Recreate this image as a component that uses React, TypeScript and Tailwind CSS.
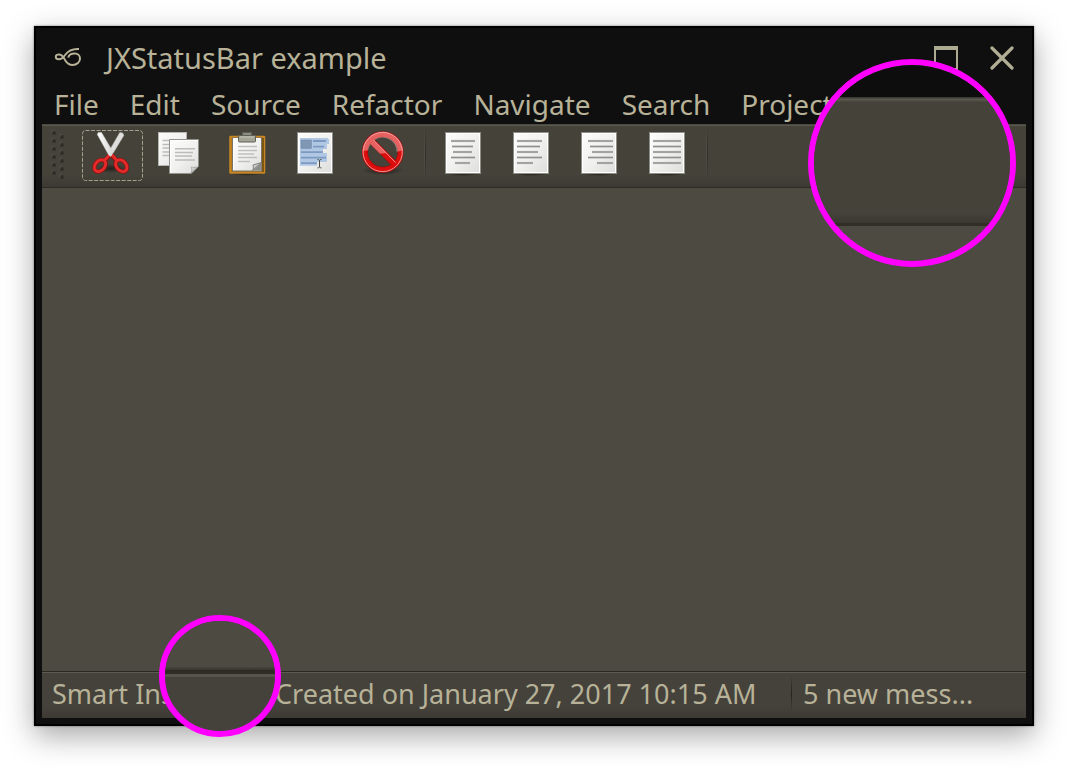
import type { ReactNode } from "react";

const MENUS = ["File", "Edit", "Source", "Refactor", "Navigate", "Search", "Project"];

function Defs() {
  return (
    <svg className="absolute size-0" aria-hidden="true">
      <defs>
        <linearGradient id="paper" x1="0" y1="0" x2="1" y2="1">
          <stop offset="0" stopColor="#fdfdfc" />
          <stop offset="0.5" stopColor="#f1f1f0" />
          <stop offset="1" stopColor="#dcdcda" />
        </linearGradient>
        <linearGradient id="blade" x1="0" y1="0" x2="1" y2="0">
          <stop offset="0" stopColor="#ffffff" />
          <stop offset="1" stopColor="#d6d6d4" />
        </linearGradient>
        <radialGradient id="shade">
          <stop offset="0" stopColor="#000" stopOpacity="0.5" />
          <stop offset="1" stopColor="#000" stopOpacity="0" />
        </radialGradient>
        <linearGradient id="fold" x1="0" y1="0" x2="1" y2="1">
          <stop offset="0" stopColor="#fafafa" />
          <stop offset="0.5" stopColor="#b9b9b7" />
          <stop offset="1" stopColor="#6f6f6c" />
        </linearGradient>
      </defs>
    </svg>
  );
}

function Icon({ children }: { children: ReactNode }) {
  return (
    <svg viewBox="0 0 48 48" className="size-12 shrink-0" aria-hidden="true">
      {children}
    </svg>
  );
}

function CutIcon() {
  return (
    <Icon>
      <ellipse cx="22" cy="38.500" rx="15" ry="4.500" fill="url(#shade)" />
      <g fill="none" stroke="#8e1010" strokeWidth="4.200">
        <ellipse cx="11" cy="35.700" rx="6.600" ry="4.800" transform="rotate(-48 11 35.700)" />
        <ellipse cx="32.300" cy="35.700" rx="6.600" ry="4.800" transform="rotate(48 32.300 35.700)" />
        <path d="M16.500 30l4.500-5M27 30l-4.500-5" />
      </g>
      <g fill="none" stroke="#e52a2a" strokeWidth="2.800">
        <ellipse cx="11" cy="35.700" rx="6.600" ry="4.800" transform="rotate(-48 11 35.700)" />
        <ellipse cx="32.300" cy="35.700" rx="6.600" ry="4.800" transform="rotate(48 32.300 35.700)" />
        <path d="M15.500 30.500l5-5.500M28 30.500l-5-5.500" />
      </g>
      <path d="M30.800 2.500l3 .6 1 2.400-10 16.500-3 4-2.500-3.500z" fill="#dededc" stroke="#c2c2c0" strokeWidth="0.500" />
      <path d="M8.300 4.500l.9-2 3.300-.1 11.400 19.400-2 4.700-2.200-1.500z" fill="url(#blade)" stroke="#cfcfcd" strokeWidth="0.500" />
    </Icon>
  );
}

function CopyIcon() {
  return (
    <Icon>
      <rect x="1.500" y="2.500" width="28" height="33" fill="url(#paper)" stroke="#b5b5b2" />
      <path d="M5.500 10.500h10M5.500 14.500h10M5.500 18h10M5.500 22h10M5.500 25.500h10" stroke="#bcbcba" strokeWidth="1.300" />
      <path d="M12.500 9.500h29v27l-7.500 7h-21.500z" fill="url(#paper)" stroke="#92928d" />
      <path d="M13.500 42.500v-32h27" fill="none" stroke="#fff" />
      <path d="M18 18.700h20M18 22.500h18M18 26h17M18 30h20" stroke="#bcbcba" strokeWidth="1.600" />
      <path d="M34 43.500c1-2 1-4 .3-6.500 2.500.8 5 .6 7.200-.5z" fill="url(#fold)" stroke="#8b8b87" strokeWidth="0.600" />
    </Icon>
  );
}

function PasteIcon() {
  return (
    <Icon>
      <ellipse cx="22" cy="43.500" rx="18" ry="2.500" fill="url(#shade)" />
      <rect x="5" y="6.500" width="34.500" height="36.500" rx="0.500" fill="#b87a18" stroke="#c98724" strokeWidth="1.500" />
      <path d="M38 8v34" stroke="#80550f" strokeWidth="2" />
      <rect x="7.500" y="8" width="29" height="33" fill="url(#paper)" stroke="#77736a" />
      <path d="M8.500 40v-31.500h27" fill="none" stroke="#fff" />
      <path d="M13 16.500h19M13 20.500h19M13 24h16M13 27.500h19M13 31.500h12" stroke="#bfbfbd" strokeWidth="1.500" />
      <path d="M27.500 40.500c1-1.500 1.200-3 .5-5.500l8.500-2.500z" fill="url(#fold)" stroke="#6b6b66" strokeWidth="0.800" />
      <path d="M28 40.500l8.500-8v8z" fill="#8d8d88" />
      <rect x="17.500" y="2.500" width="9" height="4" fill="#8b8c7e" stroke="#5f6055" />
      <rect x="13.500" y="5.500" width="17" height="6.500" rx="1" fill="#a3a394" stroke="#5f6055" />
      <path d="M15 7h14" stroke="#c4c4b8" />
    </Icon>
  );
}

function SelectAllIcon() {
  return (
    <Icon>
      <rect x="4.500" y="2.500" width="35" height="41" fill="url(#paper)" stroke="#8d8e89" />
      <rect x="5.500" y="3.500" width="33" height="39" fill="none" stroke="#fff" />
      <path d="M7 8h28v1h1v5h-2v5h-4v4h4v9h-10v3.700h-17z" fill="#b1c8e4" />
      <rect x="8" y="10" width="10.500" height="8.500" fill="#8097b3" stroke="#6e87a6" strokeWidth="0.500" />
      <path d="M20 11h13M20 16.700h11M8 22.200h22M8 27.700h25M8 33.200h16" stroke="#7d99bf" strokeWidth="1.800" />
      <path d="M24.500 29.500c1.200 0 2 .3 2 1.200v6c0 .8-.8 1.200-2 1.200M28.500 29.500c-1.200 0-2 .3-2 1.200v6c0 .8.800 1.200 2 1.200" fill="none" stroke="#4a4a48" />
    </Icon>
  );
}

function DeleteIcon() {
  return (
    <Icon>
      <ellipse cx="22" cy="40.500" rx="21" ry="5" fill="url(#shade)" />
      <circle cx="21.700" cy="22" r="17.800" fill="none" stroke="#b20a0a" strokeWidth="6" />
      <path d="M9.500 10l24.500 24.500" stroke="#b20a0a" strokeWidth="6.500" />
      <circle cx="21.700" cy="22" r="17.800" fill="none" stroke="#dc0d0d" strokeWidth="4.500" />
      <path d="M9.500 10l24.500 24.500" stroke="#dc0d0d" strokeWidth="5" />
      <path d="M1.500 21a20.300 20.300 0 0 1 40.500-.5c-3 .3-5 1-6.500 1.200A14 14 0 0 0 13 10.500l12.500 12.500-6.500.7-9.500-9.500a14 14 0 0 0-2.400 6z" fill="#fff" opacity="0.350" />
      <circle cx="21.700" cy="22" r="19.600" fill="none" stroke="#f6a4a4" strokeWidth="0.900" />
      <path d="M12.500 10l22 22.500" stroke="#f6a4a4" strokeWidth="0.900" />
    </Icon>
  );
}

function AlignIcon({ lines }: { lines: [number, number][] }) {
  return (
    <Icon>
      <ellipse cx="24" cy="44" rx="17" ry="2" fill="url(#shade)" />
      <rect x="6.500" y="2.500" width="35" height="41" fill="url(#paper)" stroke="#8d8e85" />
      <rect x="7.500" y="3.500" width="33" height="39" fill="none" stroke="#fff" />
      {lines.map(([a, b], i) => (
        <g key={i}>
          <path d={`M${a} ${11 + i * 5.5}H${b}`} stroke="#b7b7b5" strokeWidth="2.200" />
          <path d={`M${a} ${11 + i * 5.5}H${b}`} stroke="#8f8f8d" strokeWidth="1" />
        </g>
      ))}
    </Icon>
  );
}

function ToolButton({ label, focused, children }: { label: string; focused?: boolean; children: ReactNode }) {
  return (
    <button type="button" aria-label={label} className="relative flex h-[58px] w-[68px] shrink-0 justify-center pt-[5px]">
      {children}
      {focused && (
        <svg className="absolute left-[3px] top-[5px] h-[52px] w-[62px]" viewBox="0 0 62 52" aria-hidden="true">
          <rect x="0.500" y="0.500" width="60" height="50" rx="3" fill="none" stroke="#a5a18c" strokeDasharray="4 1.500" />
        </svg>
      )}
    </button>
  );
}

function Grip() {
  const rows = [0, 1, 2, 3, 4, 5];
  return (
    <svg viewBox="0 0 16 52" className="ml-2 mt-1 h-[52px] w-4 shrink-0" aria-hidden="true">
      {rows.map((i) => (
        <g key={i}>
          <circle cx="3" cy={3 + i * 8} r="2.200" fill="#4f4d45" />
          <circle cx="4" cy={4 + i * 8} r="2" fill="#302e29" />
          <circle cx="11" cy={7 + i * 8} r="2.200" fill="#4f4d45" />
          <circle cx="12" cy={8 + i * 8} r="2" fill="#302e29" />
        </g>
      ))}
    </svg>
  );
}

function ToolSeparator() {
  return (
    <div className="ml-[5px] mr-[3px] flex h-[56px] shrink-0">
      <div className="w-px bg-linear-to-b from-transparent via-[#514e46] to-transparent" />
      <div className="w-px bg-linear-to-b from-transparent via-[#2f2d27] to-transparent" />
    </div>
  );
}

function TitleBar() {
  return (
    <header className="flex h-[50px] items-center pb-[2px] pl-3 pr-2">
      <svg viewBox="0 0 28 20" className="h-5 w-7 shrink-0" aria-hidden="true">
        <path
          d="M25 1C18 0.800 14.500 2.500 11.500 6.500C9.500 9.300 8 11.300 5 11.300C2.600 11.300 1.800 9.900 1.800 8.800C1.800 7.400 3 6.400 5 6.400C9 6.400 9.500 9.500 11.500 12.700C13.500 15.900 15.800 17 18.500 17C23 17 26 14 26 10.500C26 7.500 23.800 5.500 20.800 5.500C17.500 5.500 14.800 7 14.300 9.600"
          fill="none"
          stroke="#b7b298"
          strokeWidth="2"
        />
      </svg>
      <h1 className="ml-6 flex-1 text-[29px] leading-9">JXStatusBar example</h1>
      <button type="button" aria-label="Maximize" className="flex size-8 items-center justify-center">
        <svg viewBox="0 0 24 24" className="size-6" aria-hidden="true">
          <path d="M0 0h24v24H0zM2 4v18h20V4z" fill="#aeaa92" fillRule="evenodd" />
        </svg>
      </button>
      <button type="button" aria-label="Close" className="ml-6 flex size-8 items-center justify-center">
        <svg viewBox="0 0 24 24" className="size-6" aria-hidden="true">
          <path d="M2 2l20 20M22 2L2 22" stroke="#b2ae96" strokeWidth="3.200" strokeLinecap="round" />
        </svg>
      </button>
    </header>
  );
}

function MenuBar() {
  return (
    <nav className="flex h-10 items-center gap-[31px] pl-3">
      {MENUS.map((m) => (
        <button key={m} type="button" className="text-[28px] leading-9">
          {m}
        </button>
      ))}
    </nav>
  );
}

function ToolBar() {
  return (
    <div role="toolbar" className="flex h-16 items-start overflow-hidden border-b border-t border-b-[#2d2b25] border-t-[#4b4941] bg-linear-to-b from-[#45423a] from-80% to-[#3c3a33] shadow-[inset_0_1px_0_#5a574d]">
      <Grip />
      <div className="ml-[13px] flex">
        <ToolButton label="Cut" focused><CutIcon /></ToolButton>
        <ToolButton label="Copy"><CopyIcon /></ToolButton>
        <ToolButton label="Paste"><PasteIcon /></ToolButton>
        <ToolButton label="Select all"><SelectAllIcon /></ToolButton>
        <ToolButton label="Delete"><DeleteIcon /></ToolButton>
      </div>
      <ToolSeparator />
      <div className="flex">
        <ToolButton label="Align center"><AlignIcon lines={[[12, 36], [13, 34], [14, 33], [12, 36], [16, 31]]} /></ToolButton>
        <ToolButton label="Align left"><AlignIcon lines={[[10, 35], [10, 33], [10, 31], [10, 35], [10, 26]]} /></ToolButton>
        <ToolButton label="Align right"><AlignIcon lines={[[13, 38], [15, 38], [17, 38], [13, 38], [22, 38]]} /></ToolButton>
        <ToolButton label="Justify"><AlignIcon lines={[[10, 38], [10, 38], [10, 38], [10, 38], [10, 38]]} /></ToolButton>
      </div>
      <ToolSeparator />
    </div>
  );
}

function StatusBar() {
  return (
    <footer className="flex h-[47px] items-center border-t border-[#2b2923] bg-linear-to-b from-[#45423b] from-75% to-[#3d3a34] pb-[2px] text-[27px] leading-9 shadow-[inset_0_1px_0_#5d5a50]">
      <span className="w-[233px] shrink-0 pl-[10px]">Smart Ins</span>
      <span className="flex-1 whitespace-nowrap">Created on January 27, 2017 10:15 AM</span>
      <span className="h-9 w-px bg-linear-to-b from-transparent via-[#24221e] to-transparent" />
      <span className="w-[234px] shrink-0 pl-[11px]">5 new mess...</span>
    </footer>
  );
}

function ToolbarLens() {
  return (
    <div className="absolute right-[18px] top-[33px] flex size-[208px] flex-col overflow-hidden rounded-full border-6 border-[#ff00ff] bg-[#4d4a41]" aria-hidden="true">
      <div className="h-[32px] shrink-0 bg-[#0d0d0d]" />
      <div className="h-[5px] shrink-0 bg-linear-to-b from-[#33322d] via-[#5b594f] to-[#45423a]" />
      <div className="h-[111px] shrink-0 bg-[#45423a]" />
      <div className="h-[10px] shrink-0 bg-linear-to-b from-[#45423a] to-[#3a3831]" />
      <div className="h-[3px] shrink-0 bg-[#302e27]" />
    </div>
  );
}

function StatusLens() {
  return (
    <div className="absolute -bottom-[11px] left-[125px] flex size-[122px] flex-col overflow-hidden rounded-full border-6 border-[#ff00ff] bg-[#45423b]" aria-hidden="true">
      <div className="h-[46px] shrink-0 bg-[#4d4a41]" />
      <div className="h-[3px] shrink-0 bg-linear-to-b from-[#48453d] to-[#38352e]" />
      <div className="h-[4px] shrink-0 bg-[#2f2c26]" />
      <div className="h-[3px] shrink-0 bg-[#57554b]" />
    </div>
  );
}

export default function App() {
  return (
    <div className="flex min-h-screen flex-col bg-white px-[34px] pb-[42px] pt-[26px] font-['Noto_Sans','Open_Sans',sans-serif] text-[#b7b298]">
      <Defs />
      <div className="relative flex flex-1 flex-col bg-[#0f0f0f] p-2 shadow-[inset_0_0_0_2px_#000,0_0_2px_rgba(0,0,0,0.5),0_10px_28px_rgba(0,0,0,0.35)]">
        <TitleBar />
        <MenuBar />
        <ToolBar />
        <main className="flex-1 bg-[#4d4a41]" />
        <StatusBar />
        <ToolbarLens />
        <StatusLens />
      </div>
    </div>
  );
}
